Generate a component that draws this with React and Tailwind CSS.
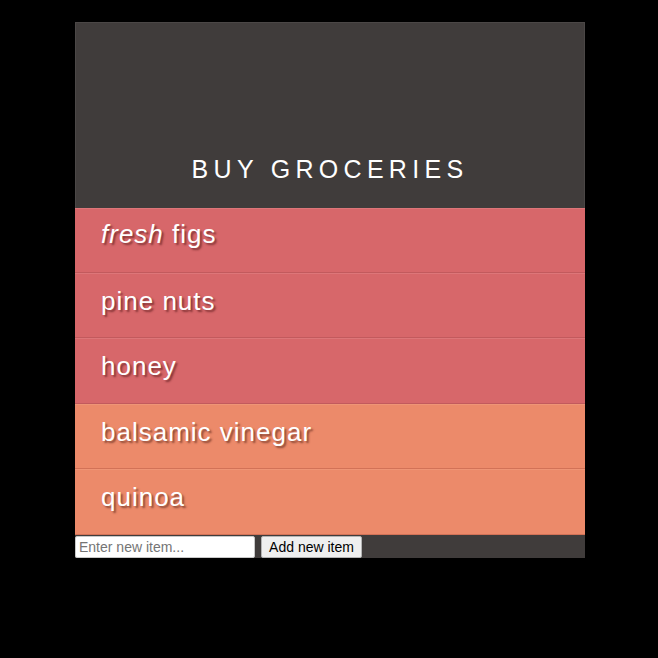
export default function App() {
  const items = [
    { label: <><em>fresh</em> figs</>, color: "red", h: "h-[65px] pt-[6px]" },
    { label: "pine nuts", color: "red", h: "h-[65px] pt-[8px]" },
    { label: "honey", color: "red", h: "h-[66px] pt-[8px]" },
    { label: "balsamic vinegar", color: "orange", h: "h-[65px] pt-[8px]" },
    { label: "quinoa", color: "orange", h: "h-[66px] pt-[8px]" },
  ];
  return (
    <div className="min-h-[658px] w-[658px] bg-black pt-[22px] font-['Liberation_Sans',Arial,sans-serif]">
      <div className="ml-[75px] w-[510px] bg-[#403c3b]">
        <div className="h-[186px] border-x border-t border-[#4b4746] pt-[128px] text-center text-[25px] leading-normal tracking-[5.3px] text-white">
          BUY GROCERIES
        </div>
        <ul>
          {items.map((it, i) => (
            <li
              key={i}
              className={
                it.h +
                (it.color === "red"
                  ? " border-t border-b border-t-[#dd7679] border-b-[#c25a5d] bg-[#d7676a] pl-[26px] text-[26px] leading-normal tracking-[1px] text-white [text-shadow:2px_2px_2px_rgba(80,20,20,0.6)]"
                  : " border-t border-b border-t-[#ef9576] border-b-[#d27257] bg-[#ec8a6a] pl-[26px] text-[26px] leading-normal tracking-[1px] text-white [text-shadow:2px_2px_2px_rgba(80,30,20,0.6)]")
              }
            >
              {it.label}
            </li>
          ))}
        </ul>
        <div className="flex h-[23px] items-end gap-[6px]">
          <input
            className="h-[22px] w-[180px] rounded-[2px] border border-[#c8c8c8] bg-white px-[3px] text-[14px] text-black outline-none placeholder:text-[#757575]"
            placeholder="Enter new item..."
          />
          <button className="h-[22px] w-[101px] rounded-[2px] border border-[#b4b4b4] bg-[#efefef] text-[14px] text-black">
            Add new item
          </button>
        </div>
      </div>
    </div>
  );
}
